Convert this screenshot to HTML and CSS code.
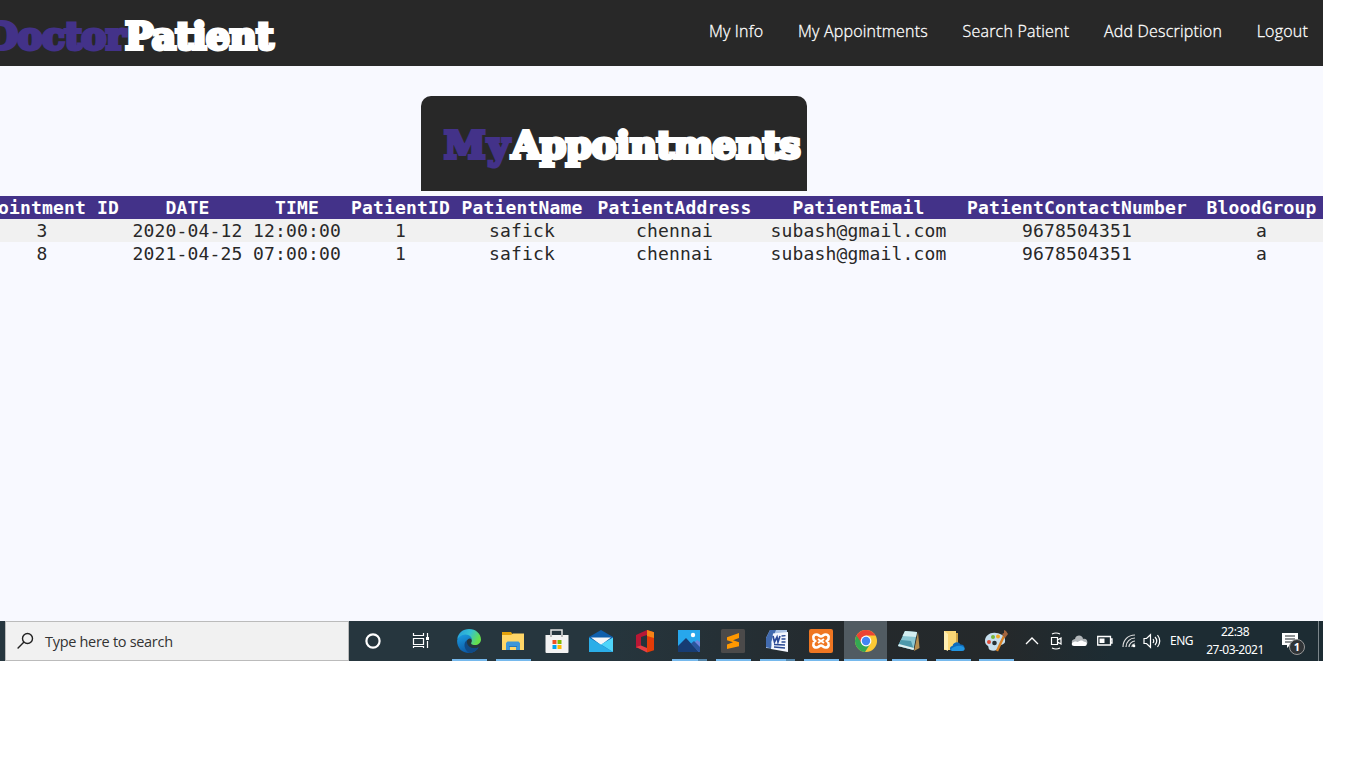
FILE: index.html
```html
<!DOCTYPE html>
<html lang="en">
<head>
<meta charset="utf-8">
<title>My Appointments</title>
<link rel="stylesheet" href="styles.css">
</head>
<body>
<div class="screen">
  <header class="navbar">
    <div class="brand slab"><span class="accent">Doctor</span><span class="patient">Patient</span></div>
    <nav class="links"><a>My Info</a><a>My Appointments</a><a>Search Patient</a><a>Add Description</a><a>Logout</a></nav>
  </header>
  <main class="content">
    <h1 class="title slab"><span class="accent my">My</span><span class="name">Appointments</span></h1>
    <table class="records">
      <colgroup><col class="c1"><col class="c2"><col class="c3"><col class="c4"><col class="c5"><col class="c6"><col class="c7"><col class="c8"><col class="c9"></colgroup>
      <thead><tr><th>Appointment ID</th><th>DATE</th><th>TIME</th><th>PatientID</th><th>PatientName</th><th>PatientAddress</th><th>PatientEmail</th><th>PatientContactNumber</th><th>BloodGroup</th></tr></thead>
      <tbody>
        <tr><td>3</td><td>2020-04-12</td><td>12:00:00</td><td>1</td><td>safick</td><td>chennai</td><td>subash@gmail.com</td><td>9678504351</td><td>a</td></tr>
        <tr><td>8</td><td>2021-04-25</td><td>07:00:00</td><td>1</td><td>safick</td><td>chennai</td><td>subash@gmail.com</td><td>9678504351</td><td>a</td></tr>
      </tbody>
    </table>
  </main>
  <footer class="taskbar">
    <div class="search">
      <svg width="18" height="18" viewBox="0 0 18 18" fill="none" stroke="#222" stroke-width="1.4"><circle cx="10.500" cy="6.500" r="5"/><path d="M7 10 .6 16.400"/></svg>
      <span>Type here to search</span>
    </div>
    <div class="slot cortana"><svg width="24" height="24" viewBox="0 0 24 24"><circle cx="12" cy="12" r="6.600" fill="none" stroke="#fff" stroke-width="2.200"/></svg></div>
    <div class="slot taskview"><svg width="24" height="24" viewBox="0 0 24 24" fill="none" stroke="#fff" stroke-width="1.200"><path d="M4.500 4v2.500h10V4M4.500 9.500h10v6h-10zM4.500 19v-1.500h10V19M18.500 4v4M18.500 12v7"/><path d="M17 8h3v3h-3z" fill="#fff" stroke="none"/></svg></div>
    <div class="slot on"><svg width="24" height="24" viewBox="0 0 24 24">
      <defs><linearGradient id="eg" x1="0" x2="1" y2=".4"><stop stop-color="#2499dc"/><stop offset=".55" stop-color="#35c1d4"/><stop offset="1" stop-color="#66e04c"/></linearGradient><linearGradient id="eb" x2=".4" y2="1"><stop stop-color="#1b9de2"/><stop offset="1" stop-color="#0c59a4"/></linearGradient></defs>
      <path d="M.3 10C1 4 6 0 12 0c7 0 12 5 12 10.500 0 3.500-3 5.500-6 5.500-3.500 0-4.500-1.300-3.500-2.800 1-1.800.2-5.200-4.500-5.500C6 7.400 2 9 .3 10z" fill="url(#eg)"/>
      <path d="M.1 12C.1 8.500 4.500 5.500 8.500 5.500c4 0 6.500 3 6.500 5-2-2-5-.5-5.500 2.500-.5 5 6 8 12 5.500C19 22.500 15.500 24 12 24 5 24 .1 19 .1 12z" fill="url(#eb)"/>
      <path d="M9.800 11.200c-4 3-2.500 10 2.500 12.700 4 0 7.500-2.400 9.200-5.500-6 2.300-12-.4-11.700-7.200z" fill="#104a85"/></svg></div>
    <div class="slot on"><svg width="24" height="24" viewBox="0 0 24 24"><path d="M1 3h9l1.500 2H23v16H1z" fill="#e2a10b"/><path d="M1 6h9l2-1.500h11V21H1z" fill="#ffd667"/><path d="M5 14l1.500-1.500h11L19 14v7h-4v-4H9v4H5z" fill="#3d96d8"/><path d="M8 17h8v1H8z" fill="#2576b9"/></svg></div>
    <div class="slot"><svg width="24" height="24" viewBox="0 0 24 24"><path d="M6 8V1h11v7" fill="none" stroke="#e4e4e4" stroke-width="1.500"/><path d="M.5 6h23v17q0 1-1 1h-21q-1 0-1-1z" fill="#f3f3f3"/><path d="M6 6v2M17 6v2" stroke="#aaa" stroke-width="1.500"/><path d="M7.500 11h4v4h-4z" fill="#f25022"/><path d="M12.500 11h4v4h-4z" fill="#7fba00"/><path d="M7.500 16h4v4h-4z" fill="#00a4ef"/><path d="M12.500 16h4v4h-4z" fill="#ffb900"/></svg></div>
    <div class="slot"><svg width="24" height="24" viewBox="0 0 24 24"><path d="M0 8 12 1l12 7v15H0z" fill="#0f5fac"/><path d="M2 8.500h20L12 16z" fill="#f4f6f8"/><path d="M0 8.500 24 23H0z" fill="#2baee8"/><path d="M24 8.500 12 15.500 24 23z" fill="#4fd5fa"/></svg></div>
    <div class="slot"><svg width="24" height="24" viewBox="0 0 24 24"><path d="M3 6 14 1v5L8 8v10l-5 1z" fill="#b81735"/><path d="M3 18l5-1.500L14 19v4.500z" fill="#e83e43"/><path d="M14 1l7 2.300v18L14 23.500z" fill="#e33c08"/><path d="M14 1l7 2.300V9l-7-2z" fill="#f58316"/></svg></div>
    <div class="slot on multi"><svg width="24" height="24" viewBox="0 0 24 24"><path d="M1 1h22v22H1z" fill="#27a7ec"/><path d="M23 13v10h-9l2-8 4-4z" fill="#6e84dd"/><path d="M1 17 9 9l13 14H1z" fill="#173c73"/><path d="M14 14.500 17 12l6 6v5h-1z" fill="#29569e"/><circle cx="16" cy="6" r="2.200" fill="#fff"/></svg></div>
    <div class="slot on"><svg width="24" height="24" viewBox="0 0 24 24"><rect width="24" height="24" rx="1.500" fill="#4b4a4a"/><path d="M6 8.200 18 4v5l-6 2.200 6 2v4L6 20v-4.500l6-2.200-6-2z" fill="#ff9800"/></svg></div>
    <div class="slot on multi"><svg width="24" height="24" viewBox="0 0 24 24"><path d="M5 1h17v20L1 19V9z" fill="#a9c2e5"/><path d="M5 1h6L6 13l2 7-7-2V9z" fill="#416aae"/><path d="M8 4.500 23 3v20L6 20z" fill="#f5f8ff"/><path d="m8 7 1.500 6L12 8l1 5 2-6" fill="none" stroke="#2b4a98" stroke-width="1.700"/><path d="M16.500 7l4-.3M16.500 10h4M16.500 13h4M9 15.500l11 .5M9 18l11 1" stroke="#294994" stroke-width="1.300"/></svg></div>
    <div class="slot on"><svg width="24" height="24" viewBox="0 0 24 24"><rect width="24" height="24" rx="2" fill="#ef7622"/><path d="M7.500 5.500c2 0 3 2 4.500 2s2.500-2 4.500-2c4 0 4 4.500 1.500 6.500 2.500 2 2.500 6.500-1.500 6.500-2 0-3-2-4.500-2s-2.500 2-4.500 2c-4 0-4-4.500-1.500-6.500-2.500-2-2.500-6.500 1.500-6.500z" fill="none" stroke="#fff" stroke-width="2.600"/><path d="M9 10l6 4M15 10l-6 4" stroke="#fff" stroke-width="2"/></svg></div>
    <div class="slot on active"><svg width="24" height="24" viewBox="0 0 24 24"><circle cx="12" cy="12" r="11" fill="#fcc934"/><path d="M12 12 2.500 6.500A11 11 0 0 0 11 23l5.500-8.500z" fill="#34a853"/><path d="M2.500 6.500a11 11 0 0 1 19 0H12L7.500 14z" fill="#ea4335"/><circle cx="12" cy="12" r="5.400" fill="#fff"/><circle cx="12" cy="12" r="4.200" fill="#4285f4"/></svg></div>
    <div class="slot on"><svg width="24" height="24" viewBox="0 0 24 24"><path d="M21 3l1.500 16L17 22z" fill="#b58e50"/><path d="M8 2 20 3l-3.500 18L1 17z" fill="#8bc7d3"/><path d="M8 2 20 3l-1 5L5.500 7z" fill="#d3eef1"/><path d="M4 11 14 12l3 9L1 17z" fill="#4d98ab"/><path d="M1 17l15.500 4 .5-2L2 15z" fill="#e0eff1"/></svg></div>
    <div class="slot on narrow"><svg width="24" height="24" viewBox="0 0 24 24"><path d="M3 2h12v19H3z" fill="#fbd776"/><path d="M3 2l4 3v17l-4-2z" fill="#ffedb0"/><path d="M15 4h2v11h-2z" fill="#d2a544"/><path d="M11 22c-3-.5-2.500-5 .5-5 1-4 6-5 8-1.500 3 0 4 1.700 4 3.500 0 2-1 3-3 3z" fill="#0f6cbd"/><path d="M10 20c3-3 10-5 13.500-1 .5 2-.5 3-3 3H11z" fill="#2394df"/></svg></div>
    <div class="slot on narrow"><svg width="24" height="24" viewBox="0 0 24 24"><path d="M1 12C1 6 7 3 12 4c6 .5 10 4 9 9-1 3-4 2-5 4-2 4-6 6-10 4-2-1-1-3-2-4-2-1-3-3-3-5z" fill="#c7dfef"/><circle cx="5" cy="13" r="2" fill="#de4a37"/><circle cx="9" cy="8" r="2" fill="#77b63c"/><circle cx="14" cy="7.500" r="2" fill="#f0aa28"/><circle cx="10.500" cy="14" r="2.300" fill="#263137"/><path d="M13 22 20 7" stroke="#d98226" stroke-width="2.400"/><path d="M18 5l2-1 0-3 2 1 2 3-3 4z" fill="#a4653e"/></svg></div>
    <div class="tray">
      <svg class="chev" width="14" height="14" viewBox="0 0 14 14" fill="none" stroke="#fff" stroke-width="1.300"><path d="m1 10 6-6 6 6"/></svg>
      <svg class="meet" width="14" height="20" viewBox="0 0 14 20" fill="none" stroke="#fff" stroke-width="1.200"><path d="M3 3q4-2 8 0M3 17q4 2 8 0M2.500 6.500h6v7h-6zM8.500 9 12 7v6l-3.500-2"/></svg>
      <svg class="cloud" width="17" height="12" viewBox="0 0 17 12"><path d="M1 8C0 5 3 4 4 4 5-1 12 0 12 4c4-1 5 3 4 5z" fill="#b2b7ba"/><path d="M3 11c-3 0-3-4 0-4 1-1 3 0 4 0 2-2 5-2 6 0 3-1 4 4 1 4z" fill="#fff"/></svg>
      <svg class="battery" width="16" height="12" viewBox="0 0 16 12"><path d="M.7 1.500h12.800v8.500H.7zM13.500 4H15v4h-1.500" fill="none" stroke="#fff" stroke-width="1.300"/><path d="M2.500 3.500h5V8h-5z" fill="#fff"/></svg>
      <svg class="wifi" width="14" height="14" viewBox="0 0 14 14" fill="none" stroke="#ddd" stroke-width="1.200"><path d="M1 13C1 6 6 1 13 1M4 13c0-5 4-9 9-9M7 13c0-3 3-6 6-6M10 13c0-2 1-3 3-3"/><circle cx="12" cy="12" r="1.300" fill="#fff" stroke="none"/></svg>
      <svg class="sound" width="18" height="16" viewBox="0 0 18 16" fill="none" stroke="#fff" stroke-width="1.200"><path d="M1 5.500h2.500l4-3.800v12.600l-4-3.800H1zM10 6q1.500 2 0 4M12 4q3.500 4 0 8M14.500 2q4.500 6 0 12"/></svg>
      <span class="lang">ENG</span>
      <div class="clock"><span>22:38</span><span>27-03-2021</span></div>
      <div class="notes"><svg width="18" height="17" viewBox="0 0 18 17"><path d="M1 1h16v12h-8l-3 3v-3H1z" fill="#fff"/><path d="M4 4h10M4 7h10M4 10h7" stroke="#20292d" stroke-width="1.200"/></svg><b class="badge">1</b></div>
      <i class="peek"></i>
    </div>
  </footer>
</div>
</body>
</html>
```

FILE: styles.css
```css
* { box-sizing: border-box; }
body { margin: 0; width: 1366px; height: 768px; overflow: hidden; background: #fff; }
.screen { width: 1323px; height: 661px; overflow: hidden; background: #f8f9ff; display: flex; flex-direction: column; }
.navbar { height: 66px; flex: none; background: #282828; display: flex; justify-content: space-between; padding-right: 15px; }
.slab { font: bold 37.500px/46px "DejaVu Serif", serif; color: #fff; -webkit-text-stroke: 3.800px currentColor; white-space: nowrap; letter-spacing: -.5px; }
.accent { color: #433289; }
.brand { width: 273px; padding-top: 13px; display: flex; justify-content: flex-end; }
.links { display: flex; gap: 34.700px; padding-top: 19px; font: 300 16px/24px "Open Sans", sans-serif; letter-spacing: .2px; color: #fff; -webkit-text-stroke: .3px #fff; white-space: nowrap; }
.content { flex: 1; padding-top: 30px; }
.title { margin: 0 0 5px 421px; width: 386px; height: 95px; padding: 26px 0 0 23px; background: #282828; border-radius: 10px 10px 0 0; display: flex; }
.my { letter-spacing: 2.100px; }
.records { width: 1361px; margin-left: -38px; table-layout: fixed; border-collapse: collapse; font: 18px/23px "DejaVu Sans Mono", monospace; letter-spacing: .16px; color: #282828; white-space: nowrap; }
.records th, .records td { padding: 0; height: 23px; text-align: center; }
.records thead { background: #433289; color: #fff; }
.records tbody tr:first-child { background: #f1f1f1; }
.c1 { width: 160px; }
.c2 { width: 131px; }
.c3 { width: 88px; }
.c4 { width: 119px; }
.c5 { width: 124px; }
.c6 { width: 181px; }
.c7 { width: 187px; }
.c8 { width: 250px; }
.c9 { width: 121px; }
.records th:last-child, .records td:last-child { padding-right: 2px; }
.taskbar { height: 40px; flex: none; padding-left: 5px; display: flex; background: linear-gradient(90deg, #26363e 0, #26363e 45%, #24292c 65%, #25292b 76%, #1d2c33 84%, #1d2c33 100%); }
.search { width: 344px; flex: none; display: flex; align-items: center; gap: 10px; padding-left: 11px; background: #f1f1f1; border: 1px solid #bbb; font: 14.500px "Open Sans", sans-serif; letter-spacing: -.3px; color: #333; }
.slot { width: 44px; flex: none; display: flex; justify-content: center; align-items: center; }
.cortana { margin-left: 2px; }
.taskview { margin: 0 4px; }
.on { background: linear-gradient(#76b9ed, #76b9ed) 5px 38px / 35px 2px no-repeat; }
.multi { background: linear-gradient(90deg, #76b9ed 26px, #5587ac 26px) 5px 38px / 35px 2px no-repeat; }
.active { width: 43px; margin-left: 1px; background: linear-gradient(#76b9ed, #76b9ed) 0 38px / 43px 2px no-repeat #515b62; }
.narrow { width: 43px; }
.tray { flex: 1; display: flex; align-items: center; color: #fff; font: 12px/18px "Noto Sans", sans-serif; white-space: nowrap; }
.tray > * { flex: none; }
.chev { margin-left: 8px; }
.meet { margin-left: 10px; }
.cloud { margin-left: 8px; }
.battery { margin-left: 9px; }
.wifi { margin-left: 9px; }
.sound { margin-left: 7px; }
.lang { margin-left: 9px; width: 24px; letter-spacing: -.5px; }
.clock { width: 60px; margin-left: 11px; display: flex; flex-direction: column; align-items: center; letter-spacing: -.5px; font-size: 12px; }
.notes { position: relative; margin-left: 16px; width: 24px; height: 18px; }
.badge { position: absolute; left: 8px; top: 7px; width: 16px; height: 16px; border: 1px solid #999; border-radius: 50%; background: #303437; font-size: 11px; line-height: 14px; text-align: center; }
.peek { width: 1px; height: 40px; margin-left: auto; margin-right: 4px; background: #7c868b; }
```
